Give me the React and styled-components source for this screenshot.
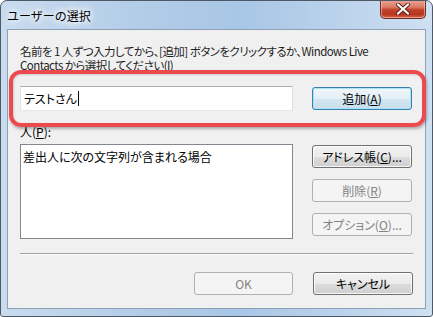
import React from "react"
import styled, { createGlobalStyle } from "styled-components"

const GlobalStyle = createGlobalStyle`
  html, body {
    margin: 0;
    padding: 0;
    background: #ffffff;
  }
  body {
    font-family: "Noto Sans CJK JP", "Noto Sans", sans-serif;
    font-size: 12px;
    font-feature-settings: "palt";
    color: #000000;
  }
`

const Window = styled.div`
  position: relative;
  width: 433px;
  height: 317px;
  box-sizing: border-box;
  display: flex;
  flex-direction: column;
  border: 1px solid #4d5a66;
  border-radius: 7px 7px 3px 3px;
  background: linear-gradient(
    90deg,
    #c9dcef 0%,
    #b4cde8 30%,
    #a8c6e6 55%,
    #bcd3ec 80%,
    #cfe0f2 100%
  );
  overflow: hidden;
`

const TitleBar = styled.div`
  height: 28px;
  display: flex;
  align-items: flex-start;
  justify-content: space-between;
  padding: 0 5px 0 6px;
`

const Title = styled.div`
  margin-top: 7px;
  font-size: 12px;
  line-height: 16px;
  color: #000000;
  font-feature-settings: normal;
  text-shadow: 0 0 6px #ffffff, 0 0 8px #ffffff, 0 0 10px #ffffff;
`

const CloseButton = styled.div`
  width: 46px;
  height: 19px;
  margin-top: -1px;
  margin-right: 1px;
  box-sizing: border-box;
  display: flex;
  align-items: center;
  justify-content: center;
  border: 1px solid #6b2a22;
  border-top: none;
  border-radius: 0 0 5px 5px;
  background: linear-gradient(180deg, #e9a797 0%, #d97a63 40%, #c2412a 55%, #b83520 80%, #d8684c 100%);
  box-shadow: inset 0 0 0 1px rgba(255, 210, 200, 0.55);
`

const Frame = styled.div`
  flex: 1;
  display: flex;
  padding: 0 6px 7px 6px;
`

const Client = styled.div`
  flex: 1;
  min-width: 0;
  box-sizing: border-box;
  border: 1px solid #8ea0b4;
  background: #f0f0f0;
  padding: 14px 12px 12px 12px;
  display: flex;
  flex-direction: column;
`

const Instruction = styled.div`
  line-height: 14px;
  font-size: 11.5px;
  letter-spacing: -0.55px;
  white-space: nowrap;
  color: #1e1e1e;
`

const Row = styled.div`
  display: grid;
  grid-template-columns: 273px 100px;
  column-gap: 19px;
  margin-top: ${p => p.$mt || 0}px;
`

const TextBox = styled.div`
  height: 25px;
  box-sizing: border-box;
  border: 1px solid #abadb3;
  border-color: #abadb3 #dbdfe6 #e3e9ef #e2e3ea;
  background: #ffffff;
  display: flex;
  align-items: center;
  padding-left: 3px;
`

const Caret = styled.span`
  display: inline-block;
  width: 1px;
  height: 15px;
  background: #000000;
  margin-left: 1px;
`

const Button = styled.div`
  height: 23px;
  box-sizing: border-box;
  align-self: ${p => p.$align || "stretch"};
  border: 1px solid ${p => (p.$disabled ? "#adb2b5" : p.$focused ? "#3c7fb1" : "#707070")};
  border-radius: 3px;
  display: flex;
  align-items: center;
  justify-content: center;
  color: ${p => (p.$disabled ? "#838383" : "#000000")};
  background: ${p =>
    p.$disabled
      ? "#f4f4f4"
      : p.$focused
      ? "linear-gradient(180deg, #f0f7fb 0%, #e3eff6 50%, #d3e6f1 51%, #c8dfec 100%)"
      : "linear-gradient(180deg, #f2f2f2 0%, #ebebeb 50%, #dddddd 51%, #cfcfcf 100%)"};
  box-shadow: ${p =>
    p.$disabled
      ? "none"
      : p.$focused
      ? "inset 0 0 0 1px #a9e3f8"
      : "inset 0 0 0 1px rgba(255,255,255,0.8)"};
`

const Label = styled.div`
  margin-top: 15px;
  line-height: 12px;
`

const ListBox = styled.div`
  height: 95px;
  box-sizing: border-box;
  border: 1px solid #828790;
  background: #ffffff;
  padding: 4px 0 0 2px;
  line-height: 16px;
`

const ButtonColumn = styled.div`
  display: flex;
  flex-direction: column;
  gap: 11px;
  padding-top: 1px;
`

const Separator = styled.div`
  margin-top: 14px;
  height: 1px;
  background: #a0a0a0;
  border-bottom: 1px solid #ffffff;
`

const Footer = styled.div`
  display: flex;
  justify-content: flex-end;
  gap: 20px;
  margin-top: 17px;
`

const FooterButton = styled(Button)`
  width: ${p => p.$w || 100}px;
`

const Highlight = styled.div`
  position: absolute;
  left: 8px;
  top: 69px;
  width: 417px;
  height: 57px;
  box-sizing: border-box;
  border: 4px solid #ec4a4e;
  border-radius: 12px;
  box-shadow: 1px 2px 3px rgba(0, 0, 0, 0.3), inset 1px 1px 2px rgba(0, 0, 0, 0.15);
  pointer-events: none;
`

const CloseIcon = () => (
  <svg width="14" height="12" viewBox="0 0 14 12">
    <path
      d="M2 1.5 L12 10.5 M12 1.5 L2 10.5"
      stroke="#5b1f16"
      strokeWidth="4"
      strokeLinecap="round"
    />
    <path
      d="M2 1.5 L12 10.5 M12 1.5 L2 10.5"
      stroke="#ffffff"
      strokeWidth="2.2"
      strokeLinecap="round"
    />
  </svg>
)

const App = () => {
  return (
    <>
      <GlobalStyle />
      <Window>
        <TitleBar>
          <Title>ユーザーの選択</Title>
          <CloseButton>
            <CloseIcon />
          </CloseButton>
        </TitleBar>
        <Frame>
          <Client>
            <Instruction>
              名前を 1 人ずつ入力してから、[追加] ボタンをクリックするか、Windows Live
              <br />
              Contacts から選択してください(<u>I</u>)
            </Instruction>
            <Row $mt={14}>
              <TextBox>
                テストさん
                <Caret />
              </TextBox>
              <Button $focused $align="center">
                追加(<u>A</u>)
              </Button>
            </Row>
            <Label>
              人(<u>P</u>):
            </Label>
            <Row $mt={6}>
              <ListBox>差出人に次の文字列が含まれる場合</ListBox>
              <ButtonColumn>
                <Button>
                  アドレス帳(<u>C</u>)...
                </Button>
                <Button $disabled>
                  削除(<u>R</u>)
                </Button>
                <Button $disabled>
                  オプション(<u>O</u>)...
                </Button>
              </ButtonColumn>
            </Row>
            <Separator />
            <Footer>
              <FooterButton $disabled $w={99}>OK</FooterButton>
              <FooterButton>キャンセル</FooterButton>
            </Footer>
          </Client>
        </Frame>
        <Highlight />
      </Window>
    </>
  )
}

export default App
